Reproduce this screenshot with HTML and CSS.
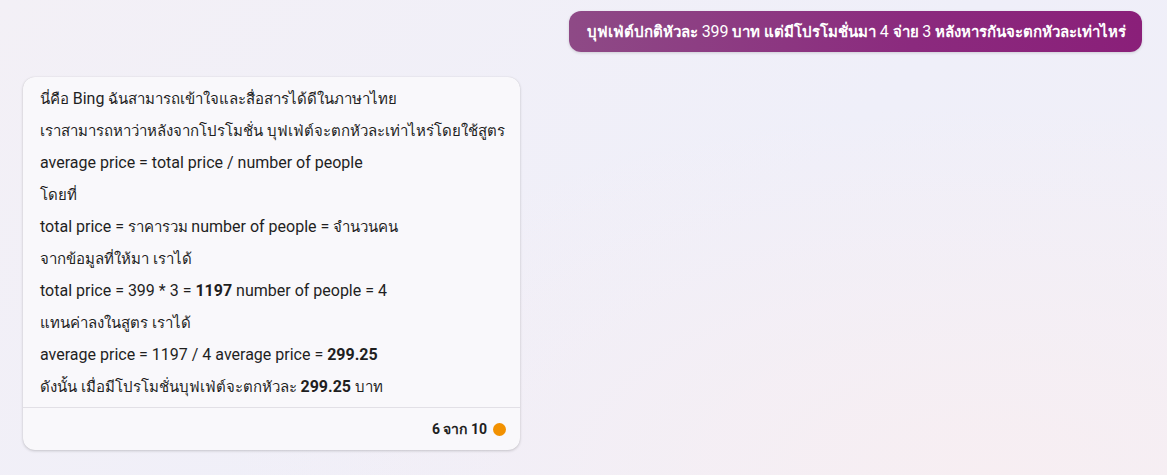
FILE: index.html
```html
<!DOCTYPE html>
<html lang="th">
<head>
<meta charset="utf-8">
<link rel="stylesheet" href="styles.css">
</head>
<body>
<div class="page">
  <div class="user-row">
    <div class="user-bubble">บุฟเฟ่ต์ปกติหัวละ <span class="num">399</span> บาท แต่มีโปรโมชั่นมา <span class="num">4</span> จ่าย <span class="num">3</span> หลังหารกันจะตกหัวละเท่าไหร่</div>
  </div>
  <div class="bot-card">
    <div class="bot-body">
      <p>นี่คือ <span class="en">Bing</span> ฉันสามารถเข้าใจและสื่อสารได้ดีในภาษาไทย</p>
      <p>เราสามารถหาว่าหลังจากโปรโมชั่น บุฟเฟ่ต์จะตกหัวละเท่าไหร่โดยใช้สูตร</p>
      <p><span class="en">average price = total price / number of people</span></p>
      <p>โดยที่</p>
      <p><span class="en">total price =</span> ราคารวม <span class="en">number of people =</span> จำนวนคน</p>
      <p>จากข้อมูลที่ให้มา เราได้</p>
      <p><span class="en">total price = 399 * 3 = <b>1197</b> number of people = 4</span></p>
      <p>แทนค่าลงในสูตร เราได้</p>
      <p><span class="en">average price = 1197 / 4 average price = <b>299.25</b></span></p>
      <p>ดังนั้น เมื่อมีโปรโมชั่นบุฟเฟ่ต์จะตกหัวละ <span class="en"><b>299.25</b></span> บาท</p>
    </div>
    <div class="bot-footer">
      <span class="count"><span class="cnum">6</span> จาก <span class="cnum">10</span></span>
      <span class="dot"></span>
    </div>
  </div>
</div>
</body>
</html>
```
FILE: styles.css
```css
html, body {
  margin: 0;
  padding: 0;
  height: 100%;
}
body {
  font-family: Roboto, "Noto Sans", sans-serif;
  background: radial-gradient(ellipse at 85% 100%, #f7eef2 0%, rgba(247,238,242,0) 55%),
              linear-gradient(135deg, #f3f0f6 0%, #efeff9 60%, #f1eff7 100%);
  color: #1f1f1f;
  overflow: hidden;
}
.page {
  display: flex;
  flex-direction: column;
  padding: 11px 25px 0 23px;
  gap: 25px;
}
.user-row {
  display: flex;
  justify-content: flex-end;
}
.user-bubble {
  background: linear-gradient(90deg, #8e4a86 0%, #8b2a7e 60%, #8a1f79 100%);
  color: #fff;
  font-size: 15px;
  font-weight: 600;
  padding: 0 16px 0 18px;
  height: 41px;
  line-height: 41px;
  border-radius: 12px;
  box-shadow: 0 1px 3px rgba(0,0,0,0.15);
  white-space: nowrap;
}
.user-bubble .num {
  font-size: 16px;
  font-weight: 400;
}
.bot-card {
  width: 497px;
  background: #f9f8fb;
  border-radius: 12px;
  box-shadow: 0 1px 3px rgba(0,0,0,0.18), 0 0 1px rgba(0,0,0,0.12);
}
.bot-body {
  padding: 6px 16px 4px 17px;
}
.bot-body p {
  margin: 0;
  font-size: 15px;
  line-height: 32px;
  white-space: nowrap;
}
.en {
  font-size: 16px;
}
.bot-body b {
  font-weight: 700;
}
.bot-footer {
  border-top: 1px solid #e2e0e6;
  display: flex;
  justify-content: flex-end;
  align-items: center;
  gap: 6px;
  height: 42px;
  padding: 0 14px 0 0;
}
.count {
  font-size: 14px;
  font-weight: 700;
  color: #1f1f1f;
}
.cnum {
  font-size: 14px;
}
.dot {
  width: 13px;
  height: 13px;
  border-radius: 50%;
  background: #f29100;
}
```
